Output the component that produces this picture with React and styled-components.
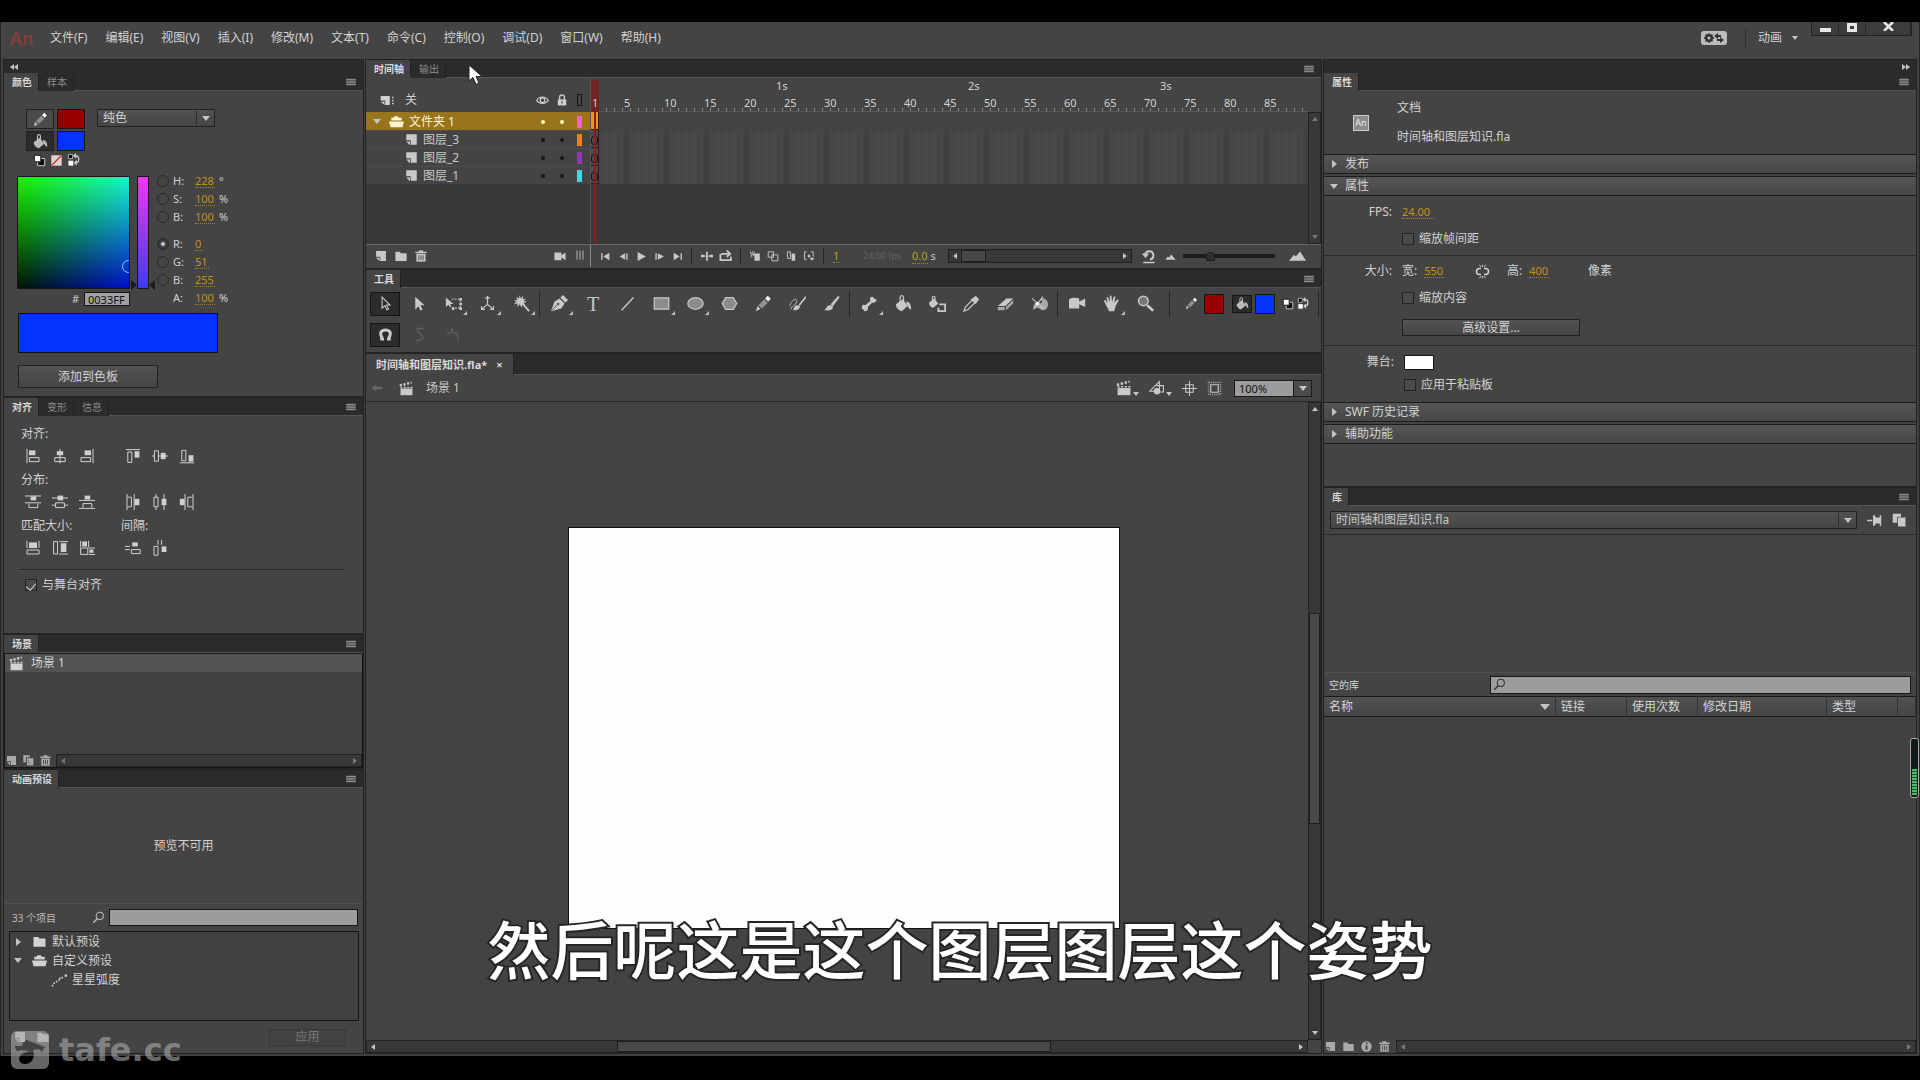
import React, { useState } from 'react';
import styled, { createGlobalStyle, css } from 'styled-components';

const GlobalStyle = createGlobalStyle`
	* {
		box-sizing: border-box;
	}
	html, body, #root {
		height: 100%;
	}
	body {
		margin: 0;
		background: #000;
		color: #d2d2d2;
		font: 12px/20px 'Noto Sans', 'Noto Sans CJK SC', sans-serif;
		overflow: hidden;
	}
	button, input, select {
		font: inherit;
		color: inherit;
		margin: 0;
		padding: 0;
		border-radius: 0;
		outline: none;
	}
`;

const layers = [
	{ name: '文件夹 1', color: '#f060e0', folder: true },
	{ name: '图层_3', color: '#f08020' },
	{ name: '图层_2', color: '#9038b8' },
	{ name: '图层_1', color: '#20e8e0' },
];

const menus = [
	'文件(F)',
	'编辑(E)',
	'视图(V)',
	'插入(I)',
	'修改(M)',
	'文本(T)',
	'命令(C)',
	'控制(O)',
	'调试(D)',
	'窗口(W)',
	'帮助(H)',
];

const frameNumbers = [1, 5, 10, 15, 20, 25, 30, 35, 40, 45, 50, 55, 60, 65, 70, 75, 80, 85];

const line = { fill: 'none', stroke: 'currentColor' };

// every drawing is kept on a 20x20 grid unless it has its own box
const icons = {
	menu: <path {...line} d="M2 5.5h16M2 8.5h16M2 11.5h16M2 14.5h16" strokeWidth="1.4" />,
	layer: (
		<>
			<path d="M3 3h14v14h-8v-6h-6z" />
			<path d="M3 12.5h5v5z" />
		</>
	),
	layerOpt: (
		<>
			<path d="M1 4h12v12h-6v-6H1z" />
			<path d="M1 11.5h5v4.5z" />
			<path d="M16 5h2v2h-2zM16 9h2v2h-2zM16 13h2v2h-2z" />
		</>
	),
	folder: <path d="M2 4h6l2 2h8v11H2z" />,
	folderOpen: (
		<>
			<path d="M3 8.5V5h3l1-2h5l1 2h4v3.5z" />
			<path d="M0 10h20l-2 7.500H2z" />
		</>
	),
	trash: (
		<>
			<path d="M7 2h6v2h5v2H2V4h5z" />
			<path d="M3.5 7h13v11h-13z" />
			<path d="M7 9v7M10 9v7M13 9v7" stroke="#444" strokeWidth="1.3" />
		</>
	),
	copy: (
		<>
			<path d="M2 2h10v3H6v8H2z" />
			<path d="M7.5 6.5h10v11h-10z" />
			<path d="M10 9v5h4" {...line} stroke="#666" />
		</>
	),
	eye: (
		<>
			<path {...line} strokeWidth="1.6" d="M1 10c4-7 14-7 18 0c-4 6-14 6-18 0z" />
			<circle cx="10" cy="9.5" r="3.6" {...line} strokeWidth="1.8" />
		</>
	),
	lock: (
		<>
			<path {...line} strokeWidth="2.2" d="M6 9V5.5a4 4 0 0 1 8 0V9" />
			<path d="M3 9h14v10H3z" />
			<path d="M9 12h2v4H9z" fill="#444" />
		</>
	),
	camera: <path d="M2 5h10v4l6-4v11l-6-4v4H2z" />,
	grip: <path {...line} strokeWidth="1.4" d="M5 1v15M10 1v15M15 1v15" />,
	first: <path d="M2 4h2.5v12H2zM17 3v14L6 10z" />,
	prev: <path d="M13 4v12L3 10zM15 4h2.5v12H15z" />,
	play: <path d="M3 2l15 8L3 18z" />,
	next: <path d="M2.5 4H5v12H2.5zM7 4l11 6-11 6z" />,
	last: <path d="M3 3l11 7-11 7zM15.5 4H18v12h-2.5z" />,
	centerFrame: (
		<>
			<path d="M8.500 3h3v15h-3z" />
			<path d="M0 8h6v4H0zM14 8h6v4h-6zM6 9.500h8v1.500H6z" />
		</>
	),
	loop: <path {...line} strokeWidth="2.6" d="M2 7v9h15V11M3 7h11M11 2l5 5-5 4" />,
	onion: (
		<>
			<path d="M6 6h12v12H9V9H6z" />
			<path {...line} strokeDasharray="1.5 1.5" strokeWidth="3" d="M2 4h9M4 5v7" />
		</>
	),
	onionLine: (
		<>
			<path {...line} strokeWidth="1.6" d="M2 3h9v9H2z" />
			<path {...line} strokeWidth="1.6" d="M8 8h10v10H8z" />
		</>
	),
	multi: (
		<>
			<path {...line} strokeWidth="1.6" d="M4 3h5v11H4z" />
			<path d="M11 6h6v12h-6z" />
		</>
	),
	marker: (
		<>
			<path {...line} strokeWidth="1.6" d="M6 3H2.5v13H6M13 3h4v8" />
			<path d="M8 8h4v4H8zM11 13h8l-4 5z" />
		</>
	),
	reset: (
		<>
			<path {...line} strokeWidth="2.6" d="M12 14a5.5 5.5 0 1 0-6.5-6" />
			<path d="M1 6h10l-5 6zM3 17h15v2H3z" />
		</>
	),
	mount: <path d="M2 15l4-5 2 2 3-5 7 8z" />,
	mountBig: <path d="M0 15l6-7 2 2 5-6 7 11z" />,
	arrowOutline: <path {...line} strokeWidth="1.3" d="M6 2.500v13l3.300-3 2.200 5 2-.9-2.200-4.800h4z" />,
	arrow: <path d="M5 2v15l3.8-3.8 2.2 5 2.5-1.2-2.3-4.8H16z" />,
	freeTransform: (
		<>
			<path d="M1 3v11l3-2.5 2 3 1.5-1-1.5-3h4z" />
			<path {...line} strokeWidth="1.3" strokeDasharray="2 1.5" d="M8 5h10v10.5H8" />
			<path d="M17 3.5h3v3h-3zM17 9h3v3h-3zM17 14.5h3v3h-3zM8 14.5h3v3H8z" />
		</>
	),
	axis: (
		<>
			<path {...line} strokeWidth="1.4" d="M10 2v9L3 17M10 11l7 6" />
			<path {...line} strokeWidth="1.4" d="M7.5 4.5L10 2l2.5 2.5M3 13v4h4M17 13v4h-4" />
		</>
	),
	wand: (
		<>
			<path d="M8 0l1 4 3-3-.5 4 4-1-3 3 4 1-4 1.3 2 3-3.5-1.5L10 15l-2-4-3 3 .5-4-4.5 1 3-3-3-2 4 .2L4 2l3 2z" />
			<path {...line} strokeWidth="2.2" d="M11 10l8 9" />
		</>
	),
	pen: (
		<>
			<path d="M0 19l4-11 6-4 6 6-4 6z" />
			<path d="M11 3l3-3 6 6-3 3z" />
			<path {...line} stroke="#444" d="M1 18l7-7" />
			<circle cx="8.5" cy="10.5" r="1.3" fill="#444" />
		</>
	),
	line: <path {...line} strokeWidth="1.6" d="M3 18L17 3" />,
	rect: <path d="M1.5 3.5h17v13h-17z" fill="#8c8c8c" stroke="currentColor" strokeWidth="1.5" />,
	ellipse: <ellipse cx="10" cy="10" rx="9" ry="6.8" fill="#8c8c8c" stroke="currentColor" strokeWidth="1.5" />,
	hexagon: <path d="M5.5 3h9l4 7-4 7h-9L1.5 10z" fill="#8c8c8c" stroke="currentColor" strokeWidth="1.5" />,
	pencil: (
		<>
			<path d="M1 19l2-6 3.5 3.5z" />
			<path d="M4 12l7-7 4 4-7 7z" opacity=".6" />
			<path d="M12 4l3-3 3.5 3.5-3 3z" fill="#fff" />
		</>
	),
	paintBrush: (
		<>
			<path d="M5 18c1-6 4-7 8-5c-1 5-4 5-8 5z" />
			<path {...line} strokeWidth="2" d="M12 12l8-10" />
			<path {...line} d="M1 13c3-9 9-10 8-5s-6 4-7 9" />
		</>
	),
	brush: (
		<>
			<path d="M1 18c4-2 3-6 7-6s5 3 2 5-6 1-9 1z" />
			<path d="M9 11l9-10 1.5 1.5-8 11z" />
		</>
	),
	bone: (
		<path d="M1 14c0-3 3-3 4-2l6-5c-1-3 0-5 2-5s2 1 2 2c2 0 4 1 3 3s-3 2-5 2l-5 5c1 3-1 5-3 5-1 0-2-1-2-2-1 0-2-1-2-3z" />
	),
	bucket: (
		<>
			<path d="M1 11l8-6 6 8-7 6c-3 0-7-4-7-8z" />
			<path {...line} strokeWidth="1.5" d="M6 11V3c0-3 4-3 4 0v6" />
			<path d="M13 8c4 0 6 3 6 9-3 0-3-4-5-5z" />
		</>
	),
	ink: (
		<>
			<path d="M0 9l6-5 5 6-6 5c-2 0-5-3-5-6z" />
			<path {...line} strokeWidth="1.3" d="M4 9V3c0-2 3-2 3 0v4" />
			<path {...line} strokeWidth="2.2" d="M12 11h7v8h-8v-4" />
		</>
	),
	dropper: (
		<>
			<path {...line} strokeWidth="1.4" d="M1 19l2-5 8-8 3 3-8 8z" />
			<path d="M9 5l2-1 4-3 4 4-3 4-1 2z" />
		</>
	),
	eraser: (
		<>
			<path d="M1 13L11 4h8l-9 9z" />
			<path d="M1 14h8v4H1zM10.5 14L19 6v4l-8.5 8z" opacity=".75" />
		</>
	),
	warp: (
		<>
			<path d="M3 16c-1-6 3-8 6-7s4 1 4-1-2-3-1-4c4-1 8 2 8 7s-3 7-6 7-4-3-6-3-3 1-5 1z" opacity=".75" />
			<path {...line} strokeWidth="1.3" d="M1 4l14 12M3 17L14 2" />
			<circle cx="7.5" cy="10" r="2" fill="#fff" />
		</>
	),
	cameraTool: <path d="M0 5c4-2 8-2 12-1v4l7-4v10l-7-3v5H0z" />,
	hand: (
		<path d="M1 6.5l1.500-1 3 4L4 3l1.700-.6L8 8V1h2l.6 7L13 1.500l1.700.5-1.500 7L17 5l1.500 1L15 13l-2 6H7c-1-3-4-7-6-12.500z" />
	),
	zoom: (
		<>
			<circle cx="7.5" cy="7" r="5.6" fill="#777" stroke="currentColor" strokeWidth="1.8" />
			<path {...line} strokeWidth="3" d="M12 12l7 6.5" />
		</>
	),
	magnet: (
		<>
			<path {...line} strokeWidth="4" d="M6 14.5H5.5C1 7 5 4 10 4s9 3 4.500 10.500H14" />
			<path d="M3 14h5v4H3zM12 14h5v4h-5z" />
		</>
	),
	smooth: <path {...line} strokeWidth="1.6" d="M15 3H8c-4 3 6 7 6 10s-3 4-8 4" />,
	straighten: <path {...line} strokeWidth="1.4" d="M2 8h6V3l3 5h2l2 4v6" />,
	blackWhite: (
		<>
			<path d="M7 7h11v11H7z" fill="#111" stroke="#ccc" strokeWidth="1.5" />
			<path d="M2 2h10v10H2z" fill="#fff" stroke="#111" strokeWidth="1.5" />
		</>
	),
	noColor: (
		<>
			<path d="M2 2h16v16H2z" fill="#e8d0d0" />
			<path {...line} stroke="#c01818" strokeWidth="1.8" d="M3 17L17 3" />
		</>
	),
	swap: (
		<>
			<path d="M2 2h6v6H2z" fill="#000" stroke="#ccc" strokeWidth="1.2" />
			<path d="M2 11h7v7H2z" fill="#fff" />
			<path {...line} strokeWidth="1.8" d="M11 4h2c5 0 5 10 0 10h-1M13 1l-3 3 3 3M14 11l-3 3 3 3" />
		</>
	),
	clapper: (
		<>
			<path d="M2 10h16v9H2z" />
			<path {...line} strokeWidth="3" strokeDasharray="3 2" d="M1 6l16-4" />
			<path {...line} strokeWidth="2" strokeDasharray="2.5 2" d="M2 8.5h16" />
		</>
	),
	symbols: (
		<>
			<path {...line} strokeWidth="1.4" d="M1 14L13 2v12z" />
			<path {...line} strokeWidth="1.4" d="M9 7h9v8h-5" />
			<circle cx="10" cy="14" r="4" />
		</>
	),
	center: (
		<>
			<path {...line} strokeWidth="1.4" d="M10 0v20M0 10h20" />
			<path {...line} strokeWidth="1.4" d="M5 5h10v10H5z" />
		</>
	),
	clip: (
		<>
			<path {...line} strokeWidth="1.6" d="M5 5h10v10H5z" />
			<path {...line} strokeDasharray="1.5 1.5" strokeWidth="2" d="M2 2h16v16H2z" opacity=".7" />
		</>
	),
	back: <path d="M1 10l8-6v4h10v4H9v4z" />,
	search: (
		<>
			<circle cx="12" cy="7.5" r="5.5" {...line} strokeWidth="1.6" />
			<path {...line} strokeWidth="2.2" d="M8 12l-6 6" />
		</>
	),
	preset: (
		<path d="M1 16h2v2H1zM3 13h2v2H3zM6 11h2v2H6zM9 9h2v2H9zM10 7h2v2h-2zM13 6h2v2h-2zM17 3h3v3h-3z" />
	),
	pin: <path d="M0 9h7v2H0zM8 3h2l2 3h5V3h2v14h-2v-3h-5l-2 3H8z" />,
	newPanel: (
		<>
			<path d="M1 1h11v4H7v8H1z" />
			<path d="M8 6h10v12H8z" />
		</>
	),
	info: (
		<>
			<circle cx="10" cy="10" r="8" />
			<path d="M9 4h2.5v3H9zM8.5 8.5h3V15h-3z" fill="#444" />
		</>
	),
	link: (
		<>
			<path {...line} strokeWidth="2" d="M8 6H6a4 4 0 0 0 0 8h2M12 6h2a4 4 0 0 1 0 8h-2" />
			<path {...line} strokeWidth="1.2" d="M10 1v3M6 1l2 3M14 1l-2 3M10 16v3M6 19l2-3M14 19l-2-3" />
		</>
	),
	// align panel
	alLeft: (
		<>
			<path d="M5 3h8v6H5z" />
			<path {...line} strokeWidth="1.25" d="M2.5 1v18M5.5 12h12v5h-12z" />
		</>
	),
	alCenter: (
		<>
			<path d="M6 4h8v5H6z" />
			<path {...line} strokeWidth="1.25" d="M10 1v18M3.5 12h13v5h-13z" />
		</>
	),
	alRight: (
		<>
			<path d="M7 3h8v6H7z" />
			<path {...line} strokeWidth="1.25" d="M17.5 1v18M2.5 12h12v5h-12z" />
		</>
	),
	alTop: (
		<>
			<path d="M12 4h6v8h-6z" />
			<path {...line} strokeWidth="1.25" d="M1 2h18M3.5 5h5v13h-5z" />
		</>
	),
	alMiddle: (
		<>
			<path d="M11 6h6v8h-6z" />
			<path {...line} strokeWidth="1.25" d="M0 10h3M8 10h12M3 3.5h5v13H3z" />
		</>
	),
	alBottom: (
		<>
			<path d="M12 9h6v8h-6z" />
			<path {...line} strokeWidth="1.25" d="M1 18.5h18M3.5 3h5v13h-5z" />
		</>
	),
	diTop: (
		<>
			<path d="M7 3h7v5H7z" />
			<path {...line} strokeWidth="1.25" d="M0 2.5h20M0 11h20M5 12v5h11v-5" />
		</>
	),
	diMiddle: (
		<>
			<path d="M7 2h7v6H7z" />
			<path {...line} strokeWidth="1.25" d="M0 5h20M0 14h4M16 14h4M4.5 11h11v6h-11z" />
		</>
	),
	diBottom: (
		<>
			<path d="M7 2h7v5H7z" />
			<path {...line} strokeWidth="1.25" d="M0 8h20M0 18h20M5 17v-5h11v5" />
		</>
	),
	diLeft: (
		<>
			<path d="M12 6h6v8h-6z" />
			<path {...line} strokeWidth="1.25" d="M2.5 0v20M3 4h5v12H3M11.5 0v20" />
		</>
	),
	diCenter: (
		<>
			<path d="M12 6h6v8h-6z" />
			<path {...line} strokeWidth="1.25" d="M5 0v4M5 16v4M2.5 4h5v12h-5zM15 0v20" />
		</>
	),
	diRight: (
		<>
			<path d="M1 6h6v8H1z" />
			<path {...line} strokeWidth="1.25" d="M7.5 0v20M17.5 0v20M17 4h-6v12h6" />
		</>
	),
	sizeW: (
		<>
			<path d="M5 3h10v7H5z" />
			<path {...line} strokeWidth="1.25" d="M2.5 1v9M17.5 1v9M2.5 12.5h15v5h-15z" />
		</>
	),
	sizeH: (
		<>
			<path d="M11 4h7v11h-7z" />
			<path {...line} strokeWidth="1.25" d="M9 2h11M9 17.5h11M2 2h5v15.500H2z" />
		</>
	),
	sizeBoth: (
		<>
			<path d="M4 2h6v6H4zM13 12h5v4h-5z" />
			<path {...line} strokeWidth="1.25" d="M2 1v8M12 1v8M2 10h9v8H2zM12 10h8M12 18h8" />
		</>
	),
	gapV: (
		<>
			<path d="M9 3h7v5H9z" />
			<path {...line} strokeWidth="1.25" d="M0 8h6M0 12h6M8 12h11v5H8z" />
		</>
	),
	gapH: (
		<>
			<path d="M12 8h6v7h-6z" />
			<path {...line} strokeWidth="1.25" d="M7.5 0v6M12 0v6M2.5 8h5v11h-5z" />
		</>
	),
};

const Svg = styled.svg`
	display: block;
	flex: none;
	fill: currentColor;
`;

function Icon({ name, size = 14 }) {
	return (
		<Svg width={size} height={size} viewBox="0 0 20 20" aria-hidden="true">
			{icons[name]}
		</Svg>
	);
}

const Screen = styled.div`
	position: relative;
	height: 100vh;
	padding: 22px 0 24px;
`;

const Window = styled.div`
	display: flex;
	flex-direction: column;
	height: 100%;
	background: #444;
	border-left: 1px solid #262626;
	border-right: 1px solid #262626;
`;

const TitleBar = styled.header`
	display: flex;
	flex: none;
	height: 38px;
	padding: 0 7px 0 9px;
`;

const Logo = styled.span`
	width: 40px;
	color: #8c3c34;
	font-family: 'Open Sans', sans-serif;
	font-size: 18px;
	font-weight: 600;
	line-height: 32px;
`;

const Menu = styled.nav`
	display: flex;
	align-items: flex-start;
	gap: 18px;
	padding-top: 6px;
`;

const PlainButton = styled.button`
	display: flex;
	align-items: center;
	justify-content: center;
	border: 0;
	background: none;
`;

const TitleRight = styled.div`
	display: flex;
	margin-left: auto;
	gap: 13px;
`;

const SyncButton = styled(PlainButton)`
	width: 26px;
	height: 14px;
	margin: 9px 5px 0 0;
	border-radius: 3px;
	background: #bbb;
	color: #333;
`;

const Workspace = styled(PlainButton)`
	gap: 10px;
	height: 20px;
	margin-top: 6px;
	padding-left: 12px;
	border-left: 1px solid #303030;
`;

const WindowButtons = styled.div`
	display: flex;
	height: 14px;
	border: 1px solid #222;
	border-top: 0;
	background: #3c3c3c;
`;

const WindowButton = styled(PlainButton)`
	align-items: flex-start;
	width: ${({ $wide }) => ($wide ? 45 : 27)}px;
	height: 13px;
	border-right: 1px solid #2a2a2a;
	color: #e6e6e6;
`;

const Main = styled.main`
	display: grid;
	grid-template-columns: 359px minmax(0, 1fr) 592px;
	gap: 3px;
	flex: 1;
	min-height: 0;
	padding: 0 3px 3px;
	background: #404040;
`;

const Column = styled.div`
	display: flex;
	flex-direction: column;
	gap: 2px;
	min-width: 0;
	min-height: 0;
	background: #242424;
	box-shadow: 0 0 0 1px #222;
`;

const DockBar = styled.div`
	display: flex;
	justify-content: ${({ $right }) => ($right ? 'flex-end' : 'flex-start')};
	align-items: center;
	flex: none;
	height: 13px;
	margin-bottom: -2px;
	padding: 0 6px;
	background: #2b2b2b;
	color: #aaa;
`;

const Panel = styled.section`
	display: flex;
	flex-direction: column;
	flex: ${({ $h }) => ($h ? `0 0 ${$h}px` : '1')};
	min-height: 0;
	background: #444;
`;

const TabRow = styled.div`
	display: flex;
	flex: none;
	height: ${({ $tall }) => ($tall ? 21 : 18)}px;
	padding-right: 5px;
	background: #2b2b2b;
	border-bottom: 1px solid #555;
`;

const Tab = styled.button`
	height: ${({ $tall }) => ($tall ? 21 : 18)}px;
	padding: 0 6px 0 8px;
	border: 0;
	border-right: 1px solid #222;
	background: #2b2b2b;
	color: #8c8c8c;
	font-size: 10px;
	line-height: 16px;
	${({ $active }) =>
		$active &&
		css`
			background: #444;
			color: #d8d8d8;
			font-weight: bold;
		`}
`;

const PanelMenu = styled(PlainButton)`
	width: 14px;
	margin-left: auto;
	color: #bbb;
`;

function PanelTabs({ tabs }) {
	const [active, setActive] = useState(0);
	return (
		<TabRow>
			{tabs.map((tab, i) => (
				<Tab key={tab} $active={i === active} onClick={() => setActive(i)}>
					{tab}
				</Tab>
			))}
			<PanelMenu aria-label="menu">
				<Icon name="menu" size={12} />
			</PanelMenu>
		</TabRow>
	);
}

const Triangle = styled.span`
	display: block;
	flex: none;
	width: 0;
	height: 0;
	border: ${({ $s }) => $s || 4}px solid transparent;
	color: ${({ $dim }) => ($dim ? '#777' : '#c4c4c4')};
	${({ $dir, $s }) => {
		const long = `${($s || 4) + 1}px`;
		if ($dir === 'right') return `border-left: ${long} solid; border-right: 0;`;
		if ($dir === 'left') return `border-right: ${long} solid; border-left: 0;`;
		if ($dir === 'up') return `border-bottom: ${long} solid; border-top: 0;`;
		return `border-top: ${long} solid; border-bottom: 0;`;
	}}
	border-top-color: ${({ $dir }) => ($dir ? 'transparent' : 'currentColor')};
	border-bottom-color: ${({ $dir }) => ($dir === 'up' ? 'currentColor' : 'transparent')};
`;

/* scroll bars */
const Scroll = styled.div`
	display: flex;
	flex-direction: ${({ $vertical }) => ($vertical ? 'column' : 'row')};
	align-items: stretch;
	flex: 1;
	min-width: 0;
	height: ${({ $vertical, $h }) => ($vertical ? 'auto' : `${$h || 13}px`)};
	border: 1px solid #232323;
	background: #383838;
`;

const ScrollArrow = styled(PlainButton)`
	flex: 0 0 12px;
`;

const ScrollSpace = styled.span`
	flex: ${({ $size }) => $size} 1 0px;
`;

const ScrollThumb = styled.span`
	flex: ${({ $size }) => $size} 1 0px;
	border: 1px solid #1e1e1e;
	background: #484848;
`;

function ScrollBar({ vertical, before = 1, thumb, after = 0, dim, h }) {
	return (
		<Scroll $vertical={vertical} $h={h}>
			<ScrollArrow aria-label="back">
				<Triangle $s={3} $dir={vertical ? 'up' : 'left'} $dim={dim} />
			</ScrollArrow>
			<ScrollSpace $size={before} />
			{thumb ? <ScrollThumb $size={thumb} /> : null}
			<ScrollSpace $size={after} />
			<ScrollArrow aria-label="forward">
				<Triangle $s={3} $dir={vertical ? undefined : 'right'} $dim={dim} />
			</ScrollArrow>
		</Scroll>
	);
}

/* form parts */
const SelectBox = styled.div`
	display: flex;
	align-items: center;
	position: relative;
	flex: ${({ $w }) => ($w ? `0 0 ${$w}px` : '1')};
	height: 18px;
	border: 1px solid #222;
	background: linear-gradient(#525252, #454545);
`;

const Select = styled.select`
	appearance: none;
	width: 100%;
	height: 16px;
	padding: 0 20px 0 5px;
	border: 0;
	background: none;
	line-height: 16px;
`;

const SelectArrow = styled.span`
	position: absolute;
	right: 0;
	display: grid;
	place-items: center;
	width: 18px;
	height: 14px;
	border-left: 1px solid #2c2c2c;
	pointer-events: none;
`;

function DropDown({ width, label, value }) {
	return (
		<SelectBox $w={width}>
			<Select aria-label={label}>
				<option>{value}</option>
			</Select>
			<SelectArrow>
				<Triangle />
			</SelectArrow>
		</SelectBox>
	);
}

const Button = styled.button`
	width: ${({ $w }) => $w}px;
	height: ${({ $h }) => $h}px;
	border: 1px solid #222;
	background: linear-gradient(#535353, #454545);
	line-height: 14px;
	&:disabled {
		background: #434343;
		border-color: #383838;
		color: #777;
	}
`;

const Check = styled.label`
	display: flex;
	align-items: center;
	gap: 5px;
	height: 20px;
`;

const CheckInput = styled.input`
	appearance: none;
	display: grid;
	place-items: center;
	width: 12px;
	height: 12px;
	border: 1px solid #222;
	background: #4a4a4a;
	&:checked::before {
		content: '';
		width: 5px;
		height: 8px;
		border: solid #ccc;
		border-width: 0 1px 1px 0;
		transform: rotate(40deg);
	}
`;

const hot = css`
	border: 0;
	border-bottom: 1px dotted #a8801e;
	background: none;
	color: #c09020;
	font-size: 11px;
	line-height: 13px;
	height: 14px;
`;

const HotValue = styled.input`
	${hot}
	width: ${({ $chars }) => $chars * 6 + 2}px;
`;

/* color panel */
const ColorBody = styled.div`
	display: flex;
	flex-direction: column;
	align-items: flex-start;
	padding: 18px 13px 0;
`;

const PaintRow = styled.div`
	display: flex;
	align-items: flex-start;
	gap: 12px;
	height: 63px;
	padding-left: 9px;
`;

const PaintGrid = styled.div`
	display: grid;
	grid-template-columns: 28px 28px;
	grid-template-rows: 20px 20px 14px;
	gap: 2px 3px;
`;

const PaintButton = styled(PlainButton)`
	height: 20px;
	border: 1px solid #222;
	background: ${({ $on }) => ($on ? '#2c2c2c' : '#4a4a4a')};
	color: #bbb;
`;

const Swatch = styled.button`
	width: ${({ $w }) => $w || 28}px;
	height: ${({ $h }) => $h || 20}px;
	border: 1px solid #181818;
	background: ${({ $color }) => $color};
`;

const MiniRow = styled.div`
	display: flex;
	align-items: center;
	gap: 4px;
	grid-column: span 2;
	padding-left: 7px;
`;

const Mixer = styled.div`
	display: flex;
	height: 135px;
`;

const FieldColumn = styled.div`
	width: 113px;
	padding-top: 4px;
`;

const Field = styled.div`
	position: relative;
	height: 113px;
	border: 1px solid #161616;
	overflow: hidden;
	background: linear-gradient(to right, #001400, #0010c8), linear-gradient(to top, #000, #18f400);
	background-blend-mode: screen;
	&::after {
		content: '';
		position: absolute;
		left: 104px;
		top: 83px;
		width: 11px;
		height: 11px;
		border: 1px solid #8cf;
		border-radius: 50%;
	}
`;

const HexRow = styled.label`
	display: flex;
	align-items: center;
	justify-content: flex-end;
	gap: 5px;
	height: 18px;
	padding-top: 2px;
	font-size: 11px;
`;

const HexInput = styled.input`
	width: 46px;
	height: 14px;
	padding: 0 3px;
	border: 1px solid #161616;
	background: #a0a0a0;
	color: #111;
	font-size: 11px;
	line-height: 12px;
`;

const Hue = styled.div`
	position: relative;
	width: 12px;
	height: 113px;
	margin: 4px 8px 0 7px;
	border: 1px solid #161616;
	background: linear-gradient(#f038f0, #4038f8);
	&::before,
	&::after {
		content: '';
		position: absolute;
		bottom: -2px;
		border: 5px solid transparent;
	}
	&::before {
		left: -7px;
		border-width: 5px 0 5px 6px;
		border-left-color: #1c1c1c;
	}
	&::after {
		right: -7px;
		border-width: 5px 6px 5px 0;
		border-right-color: #1c1c1c;
	}
`;

const Channels = styled.div`
	display: flex;
	flex-direction: column;
`;

const Channel = styled.div`
	display: grid;
	grid-template-columns: 12px 18px 20px auto;
	column-gap: 4px;
	align-items: center;
	height: 18px;
	margin-top: ${({ $gap }) => ($gap ? 9 : 0)}px;
	font-size: 11px;
	line-height: 18px;
`;

const Radio = styled.input`
	appearance: none;
	width: 12px;
	height: 12px;
	border: 1px solid #2a2a2a;
	border-radius: 50%;
	&:checked {
		background: radial-gradient(#ccc 0 1px, #383838 3px);
	}
`;

const Current = styled.div`
	width: 200px;
	height: 40px;
	margin: 6px 0 12px 1px;
	border: 1px solid #111;
	background: #0433ff;
`;

const AddButton = styled(Button)`
	margin-left: 1px;
`;

const channels = [
	['H', '228', '°'],
	['S', '100', '%'],
	['B', '100', '%'],
	['R', '0', ''],
	['G', '51', ''],
	['B', '255', ''],
	['A', '100', '%'],
];

function ColorPanel() {
	return (
		<Panel $h={323}>
			<PanelTabs tabs={['颜色', '样本']} />
			<ColorBody>
				<PaintRow>
					<PaintGrid>
						<PaintButton aria-label="stroke">
							<Icon name="pencil" size={15} />
						</PaintButton>
						<Swatch $color="#960000" aria-label="stroke color" />
						<PaintButton $on aria-label="fill">
							<Icon name="bucket" size={15} />
						</PaintButton>
						<Swatch $color="#0433ff" aria-label="fill color" />
						<MiniRow>
							<Icon name="blackWhite" size={13} />
							<Icon name="noColor" size={13} />
							<Icon name="swap" size={14} />
						</MiniRow>
					</PaintGrid>
					<DropDown width={118} label="type" value="纯色" />
				</PaintRow>
				<Mixer>
					<FieldColumn>
						<Field />
						<HexRow>
							#
							<HexInput defaultValue="0033FF" />
						</HexRow>
					</FieldColumn>
					<Hue />
					<Channels>
						{channels.map(([name, value, unit], i) => (
							<Channel key={i} $gap={i === 3}>
								{name === 'A' ? (
									<span />
								) : (
									<Radio type="radio" name="channel" id={`ch${i}`} defaultChecked={name === 'R'} />
								)}
								<label htmlFor={name === 'A' ? 'val6' : `ch${i}`}>{name}:</label>
								<HotValue id={`val${i}`} aria-label={name} $chars={value.length} defaultValue={value} />
								<span>{unit}</span>
							</Channel>
						))}
					</Channels>
				</Mixer>
				<Current />
				<AddButton $w={140} $h={23}>
					添加到色板
				</AddButton>
			</ColorBody>
		</Panel>
	);
}

/* align panel */
const AlignBody = styled.div`
	padding: 8px 18px 0 15px;
`;

const AlignRow = styled.div`
	display: flex;
	gap: 19px;
	height: 46px;
`;

const AlignGroup = styled.div`
	width: 81px;
`;

const AlignLabel = styled.div`
	height: 24px;
	padding-left: 2px;
`;

const AlignButtons = styled.div`
	display: flex;
`;

const AlignButton = styled(PlainButton)`
	width: 27px;
	height: 16px;
	color: #d0d0d0;
`;

const AlignCheck = styled.div`
	margin-top: 7px;
	padding: 5px 6px;
	border-top: 1px solid #2a2a2a;
	box-shadow: inset 0 1px #4c4c4c;
`;

const alignRows = [
	[
		['对齐:', ['alLeft', 'alCenter', 'alRight']],
		['', ['alTop', 'alMiddle', 'alBottom']],
	],
	[
		['分布:', ['diTop', 'diMiddle', 'diBottom']],
		['', ['diLeft', 'diCenter', 'diRight']],
	],
	[
		['匹配大小:', ['sizeW', 'sizeH', 'sizeBoth']],
		['间隔:', ['gapV', 'gapH']],
	],
];

function AlignPanel() {
	return (
		<Panel $h={235}>
			<PanelTabs tabs={['对齐', '变形', '信息']} />
			<AlignBody>
				{alignRows.map((row, i) => (
					<AlignRow key={i}>
						{row.map(([label, names]) => (
							<AlignGroup key={names[0]}>
								<AlignLabel>{label}</AlignLabel>
								<AlignButtons>
									{names.map((name) => (
										<AlignButton key={name} aria-label={name}>
											<Icon name={name} size={16} />
										</AlignButton>
									))}
								</AlignButtons>
							</AlignGroup>
						))}
					</AlignRow>
				))}
				<AlignCheck>
					<Check>
						<CheckInput type="checkbox" defaultChecked />
						与舞台对齐
					</Check>
				</AlignCheck>
			</AlignBody>
		</Panel>
	);
}

/* scene panel */
const SceneList = styled.div`
	display: flex;
	flex-direction: column;
	flex: 1;
	border: 1px solid #161616;
	background: #414141;
`;

const SceneRow = styled.div`
	display: flex;
	align-items: center;
	gap: 7px;
	height: 18px;
	padding-left: 4px;
	background: #525252;
`;

const Footer = styled.div`
	display: flex;
	align-items: center;
	flex: none;
	height: 13px;
	margin-top: auto;
`;

const FooterButton = styled(PlainButton)`
	justify-content: flex-start;
	width: ${({ $w }) => $w || 17}px;
	height: 12px;
	color: #aaa;
`;

function ScenePanel() {
	return (
		<Panel $h={133}>
			<PanelTabs tabs={['场景']} />
			<SceneList>
				<SceneRow>
					<Icon name="clapper" size={15} />
					场景 1
				</SceneRow>
				<Footer>
					<FooterButton aria-label="add">
						<Icon name="layer" size={13} />
					</FooterButton>
					<FooterButton aria-label="copy">
						<Icon name="copy" size={13} />
					</FooterButton>
					<FooterButton aria-label="delete">
						<Icon name="trash" size={13} />
					</FooterButton>
					<ScrollBar dim />
				</Footer>
			</SceneList>
		</Panel>
	);
}

/* motion presets */
const Preview = styled.div`
	display: grid;
	place-items: center;
	flex: none;
	height: 116px;
	border-bottom: 1px solid #505050;
`;

const PresetSearch = styled.div`
	display: flex;
	align-items: center;
	height: 27px;
	padding: 0 5px 0 8px;
`;

const Count = styled.label`
	display: flex;
	align-items: center;
	justify-content: space-between;
	width: 97px;
	padding-right: 4px;
	color: #bbb;
	font-size: 10px;
`;

const SearchInput = styled.input`
	flex: 1;
	min-width: 0;
	height: 17px;
	border: 1px solid #161616;
	background: #9c9c9c;
	color: #222;
`;

const PresetList = styled.div`
	display: flex;
	flex-direction: column;
	flex: 1;
	margin: 0 4px 0 5px;
	border: 1px solid #161616;
	background: #414141;
`;

const PresetRow = styled.div`
	display: flex;
	align-items: center;
	gap: 5px;
	height: 19px;
	padding-left: ${({ $deep }) => ($deep ? 41 : 4)}px;
`;

const Twist = styled.span`
	display: grid;
	place-items: center;
	width: 8px;
	margin-right: 5px;
`;

const PresetFooter = styled.div`
	display: flex;
	align-items: center;
	gap: 9px;
	flex: none;
	height: 32px;
	padding: 0 17px 0 9px;
	color: #c8c8c8;
`;

const Push = styled.span`
	flex: 1;
`;

function PresetPanel() {
	return (
		<Panel>
			<PanelTabs tabs={['动画预设']} />
			<Preview>预览不可用</Preview>
			<PresetSearch>
				<Count htmlFor="presetSearch">
					33 个项目
					<Icon name="search" size={13} />
				</Count>
				<SearchInput id="presetSearch" />
			</PresetSearch>
			<PresetList>
				<PresetRow>
					<Twist>
						<Triangle $dir="right" />
					</Twist>
					<Icon name="folder" size={15} />
					默认预设
				</PresetRow>
				<PresetRow>
					<Twist>
						<Triangle />
					</Twist>
					<Icon name="folderOpen" size={15} />
					自定义预设
				</PresetRow>
				<PresetRow $deep>
					<Icon name="preset" size={16} />
					星星弧度
				</PresetRow>
			</PresetList>
			<PresetFooter>
				<Icon name="layer" />
				<Icon name="folder" />
				<Push />
				<Button $w={77} $h={17} disabled>
					应用
				</Button>
			</PresetFooter>
		</Panel>
	);
}

/* timeline */
const TimelineGrid = styled.div`
	display: grid;
	grid-template-columns: 225px minmax(0, 1fr) 13px;
	flex: 1;
	min-height: 0;
	background: #383838;
`;

const LayerColumn = styled.div`
	border-right: 1px solid #555;
`;

const LayerHead = styled.div`
	display: grid;
	grid-template-columns: 25px 1fr 19px 19px 17px;
	align-items: center;
	justify-items: center;
	height: 34px;
	padding: 10px 2px 0 14px;
	background: #444;
	& > :nth-child(2) {
		justify-self: start;
	}
	& > :first-child {
		justify-self: start;
	}
`;

const OutlineBox = styled.span`
	width: 5px;
	height: 12px;
	border: 1px solid #111;
`;

const LayerRow = styled.div`
	display: grid;
	grid-template-columns: ${({ $folder }) => ($folder ? '22px 17px' : '38px 15px')} 1fr 19px 19px 17px;
	align-items: center;
	justify-items: center;
	height: 18px;
	padding-right: 2px;
	border-top: 1px solid #4c4c4c;
	background: #444;
	color: #c8c8c8;
	${({ $folder }) =>
		$folder &&
		css`
			border-color: #987420;
			background: #98741c;
			color: #fff4d0;
		`}
`;

const LayerName = styled.span`
	justify-self: start;
	padding-left: 4px;
	line-height: 17px;
`;

const Dot = styled.span`
	width: 4px;
	height: 4px;
	border-radius: 50%;
	background: ${({ $light }) => ($light ? '#ffffb0' : '#161616')};
`;

const LayerColor = styled.span`
	width: 5px;
	height: 12px;
	background: ${({ $color }) => $color};
`;

const FrameColumn = styled.div`
	position: relative;
	overflow: hidden;
`;

const Ruler = styled.div`
	height: 34px;
	padding-left: 1px;
	overflow: hidden;
	border-bottom: 1px solid #585858;
	background: repeating-linear-gradient(to right, transparent 0 7px, #8a8a8a 7px 8px) 0 100% / 100% 3px no-repeat #444;
	font-size: 11px;
	line-height: 16px;
`;

const Seconds = styled.div`
	display: flex;
	height: 17px;
	padding-left: 184px;
	& > span {
		flex: 0 0 192px;
	}
`;

const Numbers = styled.div`
	display: flex;
	position: relative;
	z-index: 1;
	& > span {
		flex: 0 0 40px;
	}
	& > span:first-child {
		flex-basis: 32px;
	}
`;

const FrameRow = styled.div`
	height: 18px;
	background: ${({ $folder }) =>
		$folder
			? '#444'
			: `repeating-linear-gradient(to right, transparent 0 32px, #404040 32px 39px, #4b4b4b 39px 40px),
			repeating-linear-gradient(to right, #464646 0 7px, #4d4d4d 7px 8px)`};
`;

const KeyFrame = styled.span`
	display: grid;
	place-items: end center;
	width: 8px;
	height: 18px;
	padding-bottom: 2px;
	border-right: 1px solid #222;
	border-bottom: 1px solid #222;
	background: ${({ $folder }) => ($folder ? '#e8981c' : '#4a4a4a')};
	&::after {
		content: '';
		display: ${({ $folder }) => ($folder ? 'none' : 'block')};
		width: 5px;
		height: 7px;
		border: 1px solid #111;
		border-radius: 3px;
	}
`;

// the red marker lies over the ruler and every layer
const PlayHead = styled.div`
	position: absolute;
	top: 2px;
	bottom: 0;
	left: 0;
	width: 8px;
	background: linear-gradient(#8c1c20, #8c1c20) 3px 0 / 2px 100% no-repeat;
	&::before {
		content: '';
		display: block;
		height: 32px;
		background: #702428;
	}
`;

const TimelineScroll = styled.div`
	display: flex;
	padding-top: 34px;
	background: #444;
`;

const TimelineBar = styled.div`
	display: flex;
	align-items: center;
	flex: none;
	height: 24px;
	padding-bottom: 1px;
	border-top: 1px solid #666;
	background: #444;
	color: #c8c8c8;
	font-size: 11px;
`;

const BarLeft = styled.div`
	display: flex;
	align-items: center;
	flex: 0 0 225px;
	height: 22px;
	padding-left: 5px;
	border-right: 1px solid #888;
`;

const BarGroup = styled.div`
	display: flex;
	align-items: center;
	padding: 0 5px;
	border-right: 1px solid #262626;
	height: 16px;
`;

const BarButton = styled(PlainButton)`
	width: ${({ $w }) => $w || 18}px;
	height: 20px;
`;

const FrameInfo = styled.div`
	display: grid;
	grid-template-columns: 30px 49px auto;
	align-items: center;
	justify-items: start;
	width: 124px;
	padding-left: 9px;
	white-space: nowrap;
`;

const Dim = styled.span`
	color: #606060;
	font-size: 9px;
	line-height: 18px;
`;

const HotText = styled.span`
	${hot}
	color: #b8a020;
`;

const Range = styled.input`
	appearance: none;
	width: 92px;
	height: 14px;
	margin: 0 6px;
	background: linear-gradient(#1c1c1c, #1c1c1c) center / 100% 4px no-repeat;
	&::-webkit-slider-thumb {
		appearance: none;
		width: 9px;
		height: 9px;
		background: #303030;
		border: 1px solid #1a1a1a;
		border-radius: 4px 4px 1px 1px;
	}
`;

const ToolSpace = styled.span`
	width: ${({ $w }) => $w}px;
`;

const playIcons = ['first', 'prev', 'play', 'next', 'last'];

function Timeline() {
	return (
		<Panel $h={208}>
			<PanelTabs tabs={['时间轴', '输出']} />
			<TimelineGrid>
				<LayerColumn>
					<LayerHead>
						<Icon name="layerOpt" size={15} />
						<span>关</span>
						<Icon name="eye" size={13} />
						<Icon name="lock" size={12} />
						<OutlineBox />
					</LayerHead>
					{layers.map(({ name, color, folder }) => (
						<LayerRow key={name} $folder={folder}>
							{folder ? <Triangle /> : <span />}
							<Icon name={folder ? 'folderOpen' : 'layer'} size={15} />
							<LayerName>{name}</LayerName>
							<Dot $light={folder} />
							<Dot $light={folder} />
							<LayerColor $color={color} />
						</LayerRow>
					))}
				</LayerColumn>
				<FrameColumn>
					<PlayHead />
					<Ruler>
						<Seconds>
							<span>1s</span>
							<span>2s</span>
							<span>3s</span>
						</Seconds>
						<Numbers>
							{frameNumbers.map((n) => (
								<span key={n}>{n}</span>
							))}
						</Numbers>
					</Ruler>
					{layers.map(({ name, folder }) => (
						<FrameRow key={name} $folder={folder}>
							<KeyFrame $folder={folder} />
						</FrameRow>
					))}
				</FrameColumn>
				<TimelineScroll>
					<ScrollBar vertical dim />
				</TimelineScroll>
			</TimelineGrid>
			<TimelineBar>
				<BarLeft>
					<BarButton $w={20} aria-label="new layer">
						<Icon name="layer" />
					</BarButton>
					<BarButton $w={20} aria-label="new folder">
						<Icon name="folder" />
					</BarButton>
					<BarButton $w={20} aria-label="delete">
						<Icon name="trash" />
					</BarButton>
					<Push />
					<BarButton $w={20} aria-label="camera">
						<Icon name="camera" />
					</BarButton>
					<BarButton $w={20} aria-label="resize">
						<Icon name="grip" size={12} />
					</BarButton>
				</BarLeft>
				<BarGroup>
					{playIcons.map((name) => (
						<BarButton key={name} aria-label={name}>
							<Icon name={name} size={11} />
						</BarButton>
					))}
				</BarGroup>
				<BarGroup>
					<BarButton $w={19} aria-label="center frame">
						<Icon name="centerFrame" size={12} />
					</BarButton>
					<BarButton $w={19} aria-label="loop">
						<Icon name="loop" size={14} />
					</BarButton>
				</BarGroup>
				<BarGroup>
					{['onion', 'onionLine', 'multi', 'marker'].map((name) => (
						<BarButton key={name} aria-label={name}>
							<Icon name={name} size={12} />
						</BarButton>
					))}
				</BarGroup>
				<FrameInfo>
					<HotText>1</HotText>
					<Dim>24.00 fps</Dim>
					<span>
						<HotText>0.0</HotText> s
					</span>
				</FrameInfo>
				<ScrollBar before={0} thumb={24} after={136} h={14} />
				<BarButton $w={32} aria-label="reset zoom">
					<Icon name="reset" size={15} />
				</BarButton>
				<Icon name="mount" size={13} />
				<Range type="range" aria-label="frame size" min="0" max="100" defaultValue="28" />
				<BarButton $w={32} aria-label="larger">
					<Icon name="mountBig" size={17} />
				</BarButton>
				<ToolSpace $w={8} />
			</TimelineBar>
		</Panel>
	);
}

/* tools */
const ToolsBody = styled.div`
	padding: 0 4px;
`;

const ToolRow = styled.div`
	display: flex;
	align-items: center;
	height: 31px;
`;

const ToolGroup = styled.div`
	display: flex;
	align-items: center;
	gap: 4px;
	height: 26px;
	& + & {
		margin-left: 3px;
		padding-left: 4px;
		border-left: 1px solid #2a2a2a;
	}
`;

const PaintGroup = styled.div`
	display: flex;
	align-items: center;
	gap: 3px;
	height: 26px;
	margin-left: 9px;
	padding: 0 8px 0 11px;
	border-left: 1px solid #2a2a2a;
	border-right: 1px solid #2a2a2a;
`;

const Tool = styled(PlainButton)`
	position: relative;
	width: 30px;
	height: 24px;
	color: #c8c8c8;
	${({ $on }) =>
		$on &&
		css`
			border: 1px solid #161616;
			background: #2c2c2c;
		`}
	${({ $more }) =>
		$more &&
		css`
			&::after {
				content: '';
				position: absolute;
				right: 1px;
				bottom: 1px;
				border: solid transparent;
				border-width: 4px 0 0 4px;
				border-bottom: 4px solid #bbb;
				border-top: 0;
			}
		`}
	&:disabled {
		color: #606060;
	}
`;

const TypeGlyph = styled.span`
	font: 20px/24px 'Liberation Serif', serif;
`;

const PaintTool = styled(PaintButton)`
	width: 20px;
	height: 18px;
	border-color: ${({ $on }) => ($on ? '#161616' : 'transparent')};
	background: ${({ $on }) => ($on ? '#2c2c2c' : 'none')};
`;

const toolGroups = [
	['arrowOutline', 'arrow', 'freeTransform', 'axis', 'wand'],
	['pen', 'T', 'line', 'rect', 'ellipse', 'hexagon', 'pencil', 'paintBrush', 'brush'],
	['bone', 'bucket', 'ink', 'dropper', 'eraser', 'warp'],
	['cameraTool', 'hand', 'zoom'],
];

const withMore = ['freeTransform', 'axis', 'wand', 'pen', 'rect', 'ellipse', 'bone', 'hand'];

function Tools() {
	const [tool, setTool] = useState('arrowOutline');
	return (
		<Panel $h={82}>
			<PanelTabs tabs={['工具']} />
			<ToolsBody>
				<ToolRow>
					{toolGroups.map((group) => (
						<ToolGroup key={group[0]}>
							{group.map((name) => (
								<Tool
									key={name}
									aria-label={name}
									$on={tool === name}
									$more={withMore.includes(name)}
									onClick={() => setTool(name)}
								>
									{name === 'T' ? <TypeGlyph>T</TypeGlyph> : <Icon name={name} size={17} />}
								</Tool>
							))}
						</ToolGroup>
					))}
					<PaintGroup>
						<PaintTool aria-label="stroke">
							<Icon name="pencil" size={13} />
						</PaintTool>
						<Swatch $w={20} $color="#960000" aria-label="stroke color" />
						<ToolSpace $w={2} />
						<PaintTool $on aria-label="fill">
							<Icon name="bucket" size={13} />
						</PaintTool>
						<Swatch $w={20} $color="#0433ff" aria-label="fill color" />
						<ToolSpace $w={1} />
						<Icon name="blackWhite" size={12} />
						<Icon name="swap" size={13} />
					</PaintGroup>
				</ToolRow>
				<ToolRow>
					<ToolGroup>
						<Tool $on aria-label="snap">
							<Icon name="magnet" size={15} />
						</Tool>
						<Tool disabled aria-label="smooth">
							<Icon name="smooth" size={17} />
						</Tool>
						<Tool disabled aria-label="straighten">
							<Icon name="straighten" size={17} />
						</Tool>
					</ToolGroup>
				</ToolRow>
			</ToolsBody>
		</Panel>
	);
}

/* document */
const DocTab = styled(Tab)`
	display: flex;
	align-items: center;
	gap: 9px;
	padding: 0 10px;
	font-size: 11px;
`;

const SceneBar = styled.div`
	display: flex;
	align-items: center;
	flex: none;
	gap: 12px;
	height: 27px;
	padding: 0 9px 0 5px;
	border-bottom: 1px solid #2a2a2a;
	color: #c8c8c8;
`;

const BackButton = styled(PlainButton)`
	margin-right: 4px;
	&:disabled {
		color: #666;
	}
`;

const SceneTools = styled.div`
	display: flex;
	align-items: center;
	gap: 10px;
`;

const SceneTool = styled(PlainButton)`
	gap: 1px;
	align-items: flex-end;
`;

const ZoomBox = styled.div`
	display: flex;
	width: 78px;
	height: 17px;
	border: 1px solid #1a1a1a;
`;

const ZoomInput = styled.input`
	width: 58px;
	padding-left: 4px;
	border: 0;
	background: #9c9c9c;
	color: #111;
	font-size: 11px;
	line-height: 15px;
`;

const ZoomButton = styled(PlainButton)`
	flex: 1;
	border-left: 1px solid #1a1a1a;
	background: #4c4c4c;
`;

const Pasteboard = styled.div`
	display: flex;
	flex: 1;
	min-height: 0;
`;

const Canvas = styled.div`
	display: flex;
	justify-content: center;
	align-items: flex-start;
	flex: 1;
	padding: 126px 0 0 13px;
	background: #434343;
`;

const Stage = styled.div`
	width: 550px;
	height: 400px;
	background: #fdfdfd;
	box-shadow: 0 0 0 1px #111;
`;

const VSlot = styled.div`
	display: flex;
	flex: 0 0 13px;
`;

const HSlot = styled.div`
	display: flex;
	flex: 0 0 13px;
	padding-right: 13px;
`;

function Document() {
	return (
		<Panel>
			<TabRow $tall>
				<DocTab $active $tall>
					时间轴和图层知识.fla*
					<span>×</span>
				</DocTab>
			</TabRow>
			<SceneBar>
				<BackButton disabled aria-label="back">
					<Icon name="back" size={12} />
				</BackButton>
				<Icon name="clapper" size={15} />
				<span>场景 1</span>
				<Push />
				<SceneTools>
					<SceneTool aria-label="edit scene">
						<Icon name="clapper" size={16} />
						<Triangle $s={3} />
					</SceneTool>
					<SceneTool aria-label="edit symbols">
						<Icon name="symbols" size={16} />
						<Triangle $s={3} />
					</SceneTool>
					<SceneTool aria-label="center stage">
						<Icon name="center" size={15} />
					</SceneTool>
					<SceneTool aria-label="clip content">
						<Icon name="clip" size={15} />
					</SceneTool>
				</SceneTools>
				<ZoomBox>
					<ZoomInput aria-label="zoom" defaultValue="100%" />
					<ZoomButton aria-label="zoom list">
						<Triangle />
					</ZoomButton>
				</ZoomBox>
			</SceneBar>
			<Pasteboard>
				<Canvas>
					<Stage />
				</Canvas>
				<VSlot>
					<ScrollBar vertical before={199} thumb={209} after={204} />
				</VSlot>
			</Pasteboard>
			<HSlot>
				<ScrollBar before={238} thumb={431} after={244} />
			</HSlot>
		</Panel>
	);
}

/* properties */
const DocInfo = styled.div`
	display: flex;
	align-items: center;
	gap: 28px;
	flex: none;
	height: 63px;
	padding-left: 29px;
`;

const DocBadge = styled.span`
	width: 16px;
	height: 16px;
	border: 1px solid #ccc;
	background: #8c8c8c;
	color: #eee;
	font-size: 9px;
	line-height: 14px;
	text-align: center;
`;

const DocLines = styled.div`
	display: grid;
	gap: 9px;
`;

const SectionHead = styled.button`
	display: flex;
	align-items: center;
	gap: 7px;
	flex: none;
	width: 100%;
	height: 20px;
	margin-bottom: ${({ $open }) => ($open ? 0 : 2)}px;
	padding: 0 6px;
	border: 1px solid #1c1c1c;
	border-width: 1px 0;
	background: linear-gradient(#555, #474747);
	line-height: 18px;
`;

const HeadMark = styled.span`
	display: grid;
	place-items: center;
	width: 8px;
	height: 10px;
`;

function Section({ title, open }) {
	return (
		<SectionHead $open={open}>
			<HeadMark>
				<Triangle $dir={open ? undefined : 'right'} />
			</HeadMark>
			{title}
		</SectionHead>
	);
}

const PropGroup = styled.div`
	display: grid;
	grid-template-columns: 68px 1fr;
	gap: ${({ $gap }) => $gap || 7}px 10px;
	padding: ${({ $pad }) => $pad};
	border-bottom: ${({ $last }) => ($last ? 0 : '1px solid #2c2c2c')};
`;

const PropLabel = styled.label`
	grid-column: 1;
	text-align: right;
`;

const PropRow = styled.div`
	display: flex;
	align-items: center;
	grid-column: 2;
	height: 20px;
	gap: 3px;
`;

const SizeCell = styled.div`
	display: flex;
	align-items: center;
	gap: 7px;
	width: ${({ $w }) => $w}px;
`;

const PropCheck = styled(Check)`
	grid-column: 2;
`;

const PropButton = styled(Button)`
	grid-column: 2;
	margin-top: 4px;
`;

function Properties() {
	return (
		<Panel $h={413}>
			<PanelTabs tabs={['属性']} />
			<DocInfo>
				<DocBadge>An</DocBadge>
				<DocLines>
					<span>文档</span>
					<span>时间轴和图层知识.fla</span>
				</DocLines>
			</DocInfo>
			<Section title="发布" />
			<Section title="属性" open />
			<PropGroup $pad="6px 0">
				<PropLabel htmlFor="fps">FPS:</PropLabel>
				<PropRow>
					<HotValue id="fps" $chars={5} defaultValue="24.00" />
				</PropRow>
				<PropCheck>
					<CheckInput type="checkbox" />
					缩放帧间距
				</PropCheck>
			</PropGroup>
			<PropGroup $pad="5px 0 9px">
				<PropLabel htmlFor="stageW">大小:</PropLabel>
				<PropRow>
					<SizeCell $w={70}>
						<label htmlFor="stageW">宽:</label>
						<HotValue id="stageW" $chars={3} defaultValue="550" />
					</SizeCell>
					<SizeCell $w={29}>
						<Icon name="link" size={15} />
					</SizeCell>
					<SizeCell $w={78}>
						<label htmlFor="stageH">高:</label>
						<HotValue id="stageH" $chars={3} defaultValue="400" />
					</SizeCell>
					像素
				</PropRow>
				<PropCheck>
					<CheckInput type="checkbox" />
					缩放内容
				</PropCheck>
				<PropButton $w={178} $h={17}>
					高级设置...
				</PropButton>
			</PropGroup>
			<PropGroup $gap={3} $pad="6px 0 7px 2px" $last>
				<PropLabel htmlFor="stageColor">舞台:</PropLabel>
				<PropRow>
					<Swatch id="stageColor" $w={30} $h={15} $color="#fff" />
				</PropRow>
				<PropCheck>
					<CheckInput type="checkbox" />
					应用于粘贴板
				</PropCheck>
			</PropGroup>
			<Section title="SWF 历史记录" />
			<Section title="辅助功能" />
		</Panel>
	);
}

/* library */
const LibraryBar = styled.div`
	display: flex;
	align-items: center;
	flex: none;
	height: 29px;
	padding: 0 9px 0 6px;
	gap: 10px;
	border-bottom: 1px solid #2a2a2a;
	color: #c8c8c8;
`;

const LibraryPreview = styled.div`
	flex: none;
	height: 138px;
	background: #434343;
	border-bottom: 1px solid #505050;
`;

const LibrarySearch = styled.div`
	display: flex;
	align-items: center;
	flex: none;
	height: 23px;
	padding: 0 5px;
`;

const LibraryCount = styled.label`
	width: 161px;
	font-size: 10px;
`;

const LibrarySearchBox = styled.div`
	display: flex;
	align-items: center;
	flex: 1;
	height: 18px;
	padding-left: 2px;
	border: 1px solid #161616;
	background: #9c9c9c;
	color: #333;
`;

const BareInput = styled.input`
	flex: 1;
	border: 0;
	background: none;
`;

const LibraryTable = styled.table`
	flex: none;
	width: 100%;
	border-collapse: collapse;
	table-layout: fixed;
	border: 1px solid #1a1a1a;
	border-width: 1px 0;
	background: linear-gradient(#525252, #454545);
`;

const Th = styled.th`
	width: ${({ $w }) => ($w ? `${$w}px` : 'auto')};
	height: 19px;
	padding: 0 5px;
	border-right: 1px solid #333;
	font-weight: normal;
	line-height: 19px;
	text-align: left;
`;

const ThInner = styled.span`
	display: flex;
	align-items: center;
	justify-content: space-between;
`;

const LibraryBody = styled.div`
	flex: 1;
	background: #414141;
`;

function Library() {
	return (
		<Panel>
			<PanelTabs tabs={['库']} />
			<LibraryBar>
				<DropDown label="document" value="时间轴和图层知识.fla" />
				<PlainButton aria-label="pin">
					<Icon name="pin" size={15} />
				</PlainButton>
				<PlainButton aria-label="new panel">
					<Icon name="newPanel" size={15} />
				</PlainButton>
			</LibraryBar>
			<LibraryPreview />
			<LibrarySearch>
				<LibraryCount htmlFor="librarySearch">空的库</LibraryCount>
				<LibrarySearchBox>
					<Icon name="search" size={13} />
					<BareInput id="librarySearch" />
				</LibrarySearchBox>
			</LibrarySearch>
			<LibraryTable>
				<thead>
					<tr>
						<Th>
							<ThInner>
								名称
								<Triangle $s={5} />
							</ThInner>
						</Th>
						<Th $w={71}>链接</Th>
						<Th $w={71}>使用次数</Th>
						<Th $w={129}>修改日期</Th>
						<Th $w={71}>类型</Th>
						<Th $w={18} aria-label="more" />
					</tr>
				</thead>
			</LibraryTable>
			<LibraryBody />
			<Footer>
				{['layer', 'folder', 'info', 'trash'].map((name) => (
					<FooterButton key={name} $w={18} aria-label={name}>
						<Icon name={name} size={13} />
					</FooterButton>
				))}
				<ScrollBar dim />
			</Footer>
		</Panel>
	);
}

/* things that float over the window */
const Cursor = styled.svg`
	position: absolute;
	top: 64px;
	left: 468px;
`;

const Subtitle = styled.p`
	position: absolute;
	right: 0;
	bottom: 97px;
	left: 0;
	margin: 0;
	color: #fff;
	font: 500 63px/72px 'Noto Sans CJK SC', sans-serif;
	text-align: center;
	-webkit-text-stroke: 4px #262626;
	paint-order: stroke fill;
	pointer-events: none;
`;

const Watermark = styled.div`
	position: absolute;
	left: 10px;
	bottom: 10px;
	display: flex;
	align-items: center;
	gap: 9px;
	color: #aaa;
	font: bold 32px/40px 'DejaVu Sans', sans-serif;
	opacity: 0.6;
	pointer-events: none;
`;

const Meter = styled.div`
	position: absolute;
	top: 738px;
	right: 1px;
	width: 9px;
	height: 60px;
	padding: 30px 1px 2px;
	border: 1px solid #aaa;
	border-radius: 3px;
	background: #10181a;
	&::after {
		content: '';
		display: block;
		height: 100%;
		background: repeating-linear-gradient(#50b868 0 2px, #14502a 2px 3px);
	}
`;

export default function App() {
	return (
		<Screen>
			<GlobalStyle />
			<Window>
				<TitleBar>
					<Logo>An</Logo>
					<Menu>
						{menus.map((menu) => (
							<PlainButton key={menu}>{menu}</PlainButton>
						))}
					</Menu>
					<TitleRight>
						<SyncButton aria-label="sync settings">
							<Svg width="24" height="12" viewBox="0 0 24 12">
								<circle cx="7" cy="6" r="3" fill="none" stroke="#333" strokeWidth="2" />
								<path d="M7 1v10M2 6h10M3.5 2.5l7 7M10.5 2.5l-7 7" stroke="#333" strokeWidth="1.3" />
								<circle cx="7" cy="6" r="1.5" fill="#bbb" />
								<path d="M12 4l4-3v2h3v2h-3v2zM22 8l-4 3V9h-3V7h3V5z" />
							</Svg>
						</SyncButton>
						<Workspace>
							动画
							<Triangle $s={3} />
						</Workspace>
						<WindowButtons>
							<WindowButton aria-label="minimize">
								<Svg width="11" height="10">
									<path d="M0 6h11v4H0z" />
								</Svg>
							</WindowButton>
							<WindowButton aria-label="maximize">
								<Svg width="10" height="10">
									<path d="M1.5 2.5h7v6h-7z" fill="none" stroke="currentColor" strokeWidth="3" />
								</Svg>
							</WindowButton>
							<WindowButton $wide aria-label="close">
								<Svg width="11" height="9">
									<path d="M1 0l9 9M10 0L1 9" stroke="currentColor" strokeWidth="2.5" />
								</Svg>
							</WindowButton>
						</WindowButtons>
					</TitleRight>
				</TitleBar>
				<Main>
					<Column>
						<DockBar>
							<Triangle $s={3} $dir="left" />
							<Triangle $s={3} $dir="left" />
						</DockBar>
						<ColorPanel />
						<AlignPanel />
						<ScenePanel />
						<PresetPanel />
					</Column>
					<Column>
						<Timeline />
						<Tools />
						<Document />
					</Column>
					<Column>
						<DockBar $right>
							<Triangle $s={3} $dir="right" />
							<Triangle $s={3} $dir="right" />
						</DockBar>
						<Properties />
						<Library />
					</Column>
				</Main>
			</Window>
			<Meter />
			<Watermark>
				<Svg width="40" height="40" viewBox="0 0 40 40">
					<path
						fillRule="evenodd"
						d="M7 1h26a6 6 0 0 1 6 6v26a6 6 0 0 1-6 6H7a6 6 0 0 1-6-6V7a6 6 0 0 1 6-6zM5 16h7l2-7 21 8-3 5-3-3-6 1c3 8-2 15-9 14s-6-9 0-11l5-2-9-1c-2 3-5 0-5-4z"
					/>
				</Svg>
				tafe.cc
			</Watermark>
			<Subtitle>然后呢这是这个图层图层这个姿势</Subtitle>
			<Cursor width="16" height="22" viewBox="0 0 16 22">
				<path d="M1 1v16l4-3.5 3 7 3-1.5-3-6.5h6z" fill="#fff" stroke="#222" />
			</Cursor>
		</Screen>
	);
}
